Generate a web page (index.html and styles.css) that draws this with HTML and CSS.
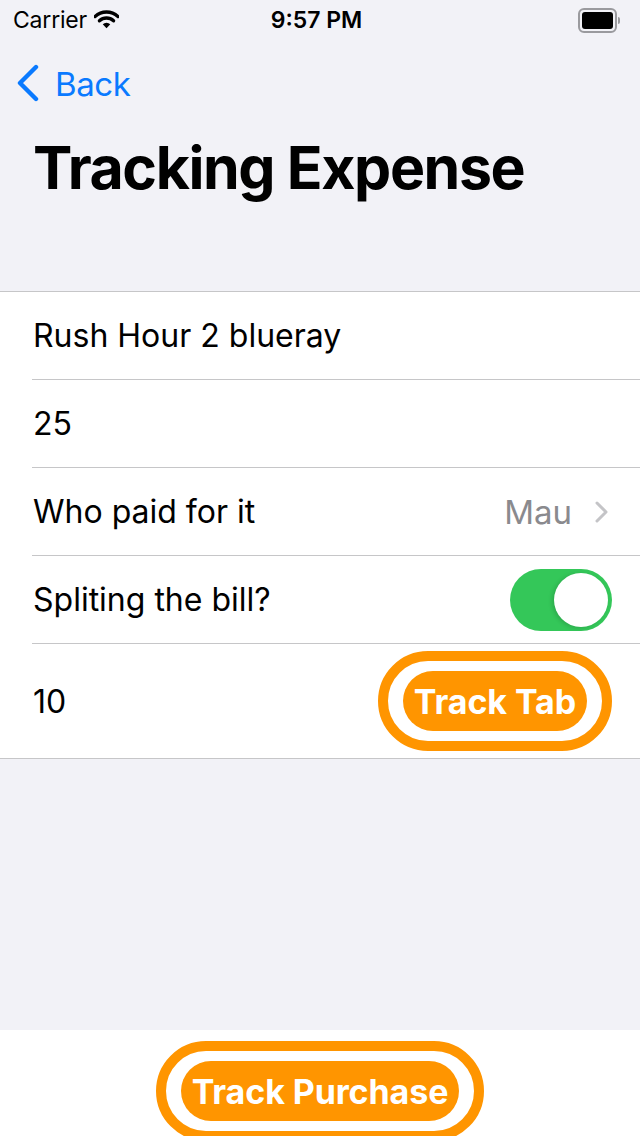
FILE: index.html
```html
<!DOCTYPE html>
<html>
<head>
<meta charset="utf-8">
<link rel="stylesheet" href="styles.css">
</head>
<body>
<div class="screen">
  <div class="status">
    <div class="status-left">
      <span class="carrier">Carrier</span>
      <svg class="wifi" width="25" height="19" viewBox="0 0 24 18">
        <path d="M1 6.2 A16 16 0 0 1 23 6.2" fill="none" stroke="#000" stroke-width="3.2" stroke-linecap="round"/>
        <path d="M5.2 10.2 A10 10 0 0 1 18.8 10.2" fill="none" stroke="#000" stroke-width="3.2" stroke-linecap="round"/>
        <path d="M8.4 13.6 L12 17.4 L15.6 13.6 A5 5 0 0 0 8.4 13.6 Z" fill="#000"/>
      </svg>
    </div>
    <div class="time">9:57 PM</div>
    <div class="status-right">
      <div class="battery"><div class="battery-fill"></div></div>
      <div class="battery-nub"></div>
    </div>
  </div>
  <div class="nav">
    <svg class="chevron" width="24" height="38" viewBox="0 0 24 38">
      <path d="M20 3 L4 19 L20 35" fill="none" stroke="#0a7aff" stroke-width="4.4" stroke-linecap="round" stroke-linejoin="round"/>
    </svg>
    <span class="back">Back</span>
  </div>
  <h1 class="title">Tracking Expense</h1>
  <div class="list">
    <div class="row"><div class="row-inner"><span>Rush Hour 2 blueray</span></div></div>
    <div class="row"><div class="row-inner"><span>25</span></div></div>
    <div class="row"><div class="row-inner">
      <span>Who paid for it</span>
      <span class="detail">Mau
        <svg class="disclosure" width="16" height="24" viewBox="0 0 16 24">
          <path d="M3 3 L12 12 L3 21" fill="none" stroke="#c4c4c7" stroke-width="3" stroke-linecap="round" stroke-linejoin="round"/>
        </svg>
      </span>
    </div></div>
    <div class="row"><div class="row-inner">
      <span>Spliting the bill?</span>
      <div class="toggle"><div class="knob"></div></div>
    </div></div>
    <div class="row row-last"><div class="row-inner">
      <span>10</span>
      <div class="ring ring-tab"><div class="pill">Track Tab</div></div>
    </div></div>
  </div>
  <div class="spacer"></div>
  <div class="footer">
    <div class="ring ring-purchase"><div class="pill">Track Purchase</div></div>
  </div>
</div>
</body>
</html>
```

FILE: styles.css
```css
html, body {
  margin: 0;
  padding: 0;
}
body {
  background: #f2f2f7;
  font-family: Inter, "Noto Sans", "Liberation Sans", sans-serif;
  color: #000;
}
.screen {
  width: 640px;
  height: 1136px;
  display: flex;
  flex-direction: column;
  overflow: hidden;
}
.status {
  height: 40px;
  display: flex;
  align-items: center;
  justify-content: space-between;
  padding: 0 20px 0 13px;
  box-sizing: border-box;
}
.status-left {
  width: 200px;
  display: flex;
  align-items: center;
  gap: 7px;
}
.carrier {
  font-size: 23px;
  letter-spacing: -0.2px;
}
.wifi {
  margin-top: -2px;
}
.time {
  font-size: 23px;
  font-weight: 600;
}
.status-right {
  width: 200px;
  display: flex;
  justify-content: flex-end;
  align-items: center;
}
.battery {
  width: 31px;
  height: 17px;
  border: 2px solid #9a9a9e;
  border-radius: 6px;
  padding: 2px;
  box-sizing: content-box;
  display: flex;
}
.battery-fill {
  flex: 1;
  background: #000;
  border-radius: 3px;
}
.battery-nub {
  width: 2px;
  height: 7px;
  background: #9a9a9e;
  border-radius: 0 2px 2px 0;
  margin-left: 1px;
}
.nav {
  height: 88px;
  display: flex;
  align-items: center;
  padding-left: 16px;
  gap: 15px;
}
.chevron {
  margin-top: -2px;
}
.back {
  color: #0a7aff;
  font-size: 33px;
  letter-spacing: -0.4px;
}
.title {
  margin: 4px 0 0 33px;
  font-size: 59px;
  line-height: 72px;
  font-weight: 700;
  letter-spacing: -1.4px;
}
.list {
  margin-top: 87px;
  background: #fff;
  border-top: 1px solid #c6c6c8;
  border-bottom: 1px solid #c6c6c8;
}
.row {
  padding-left: 32px;
}
.row-inner {
  height: 88px;
  box-sizing: border-box;
  border-bottom: 1px solid #c6c6c8;
  display: flex;
  align-items: center;
  justify-content: space-between;
  padding-right: 28px;
  padding-left: 1px;
  font-size: 32px;
  letter-spacing: 0;
}
.row-last .row-inner {
  height: 114px;
  border-bottom: none;
}
.detail {
  color: #8a8a8e;
  display: flex;
  align-items: center;
  gap: 22px;
  margin-right: 2px;
  font-size: 33px;
}
.toggle {
  width: 102px;
  height: 62px;
  border-radius: 31px;
  background: #34c759;
  box-sizing: border-box;
  padding: 4px;
  display: flex;
  justify-content: flex-end;
}
.knob {
  width: 54px;
  height: 54px;
  border-radius: 50%;
  background: #fff;
  box-shadow: -2px 1px 4px rgba(0,0,0,0.15);
}
.ring {
  border: 10px solid #ff9500;
  border-radius: 50px;
  padding: 10px 15px;
  background: #fff;
}
.pill {
  background: #ff9500;
  color: #fff;
  font-weight: 700;
  font-size: 34px;
  height: 60px;
  border-radius: 30px;
  display: flex;
  align-items: center;
  justify-content: center;
  padding: 0 11px;
  letter-spacing: -0.1px;
}
.spacer {
  flex: 1;
}
.footer {
  height: 106px;
  background: #fff;
  display: flex;
  justify-content: center;
  align-items: flex-start;
  padding-top: 11px;
  box-sizing: border-box;
  flex-shrink: 0;
}
```
